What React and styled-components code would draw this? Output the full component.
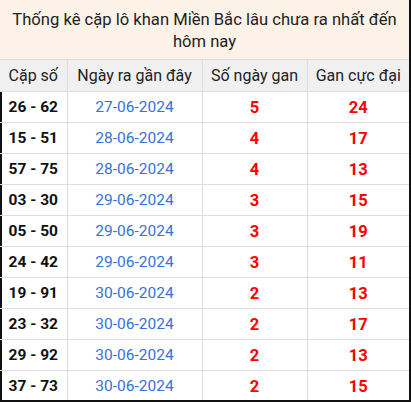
import React from "react";
import styled, { createGlobalStyle } from "styled-components";

const Global = createGlobalStyle`
  body {
    margin: 0;
    background: #fff;
    font-family: Roboto, "Noto Sans", sans-serif;
  }
`;

const Wrap = styled.div`
  width: 411px;
  height: 402px;
  box-sizing: border-box;
  border-right: 2px solid #111;
  border-bottom: 2px solid #111;
  overflow: hidden;
`;

const Caption = styled.div`
  background: #fdf2e7;
  color: #222;
  font-size: 16.6px;
  line-height: 22px;
  text-align: center;
  padding: 9px 8px 8px;
  height: 60px;
  box-sizing: border-box;
  border-bottom: 1px solid #ddd;
`;

const Table = styled.table`
  width: 100%;
  border-collapse: collapse;
  table-layout: fixed;
`;

const Th = styled.th`
  background: #f0f0f0;
  color: #222;
  font-weight: 400;
  font-size: 16px;
  height: 31px;
  padding: 0;
  border: 1px solid #ddd;
  border-top: none;
  &:first-child { border-left: none; }
  &:last-child { border-right: none; }
`;

const Td = styled.td`
  height: 30px;
  padding: 0;
  text-align: center;
  border: 1px solid #ddd;
  font-size: ${(p) => (p.$kind === "num" ? "16.5px" : "15.5px")};
  font-weight: ${(p) => (p.$kind === "date" ? 400 : 700)};
  color: ${(p) =>
    p.$kind === "date" ? "#3572dc" : p.$kind === "num" ? "#ff0000" : "#111"};
  &:first-child {
    border-left: none;
    box-shadow: inset 2px 0 #111;
  }
  &:last-child { border-right: none; }
`;

const rows = [
  ["26 - 62", "27-06-2024", 5, 24],
  ["15 - 51", "28-06-2024", 4, 17],
  ["57 - 75", "28-06-2024", 4, 13],
  ["03 - 30", "29-06-2024", 3, 15],
  ["05 - 50", "29-06-2024", 3, 19],
  ["24 - 42", "29-06-2024", 3, 11],
  ["19 - 91", "30-06-2024", 2, 13],
  ["23 - 32", "30-06-2024", 2, 17],
  ["29 - 92", "30-06-2024", 2, 13],
  ["37 - 73", "30-06-2024", 2, 15],
];

export default function App() {
  return (
    <Wrap>
      <Global />
      <Caption>Thống kê cặp lô khan Miền Bắc lâu chưa ra nhất đến hôm nay</Caption>
      <Table>
        <colgroup>
          <col style={{ width: 67 }} />
          <col style={{ width: 135 }} />
          <col style={{ width: 105 }} />
          <col />
        </colgroup>
        <thead>
          <tr>
            <Th>Cặp số</Th>
            <Th>Ngày ra gần đây</Th>
            <Th>Số ngày gan</Th>
            <Th>Gan cực đại</Th>
          </tr>
        </thead>
        <tbody>
          {rows.map((r) => (
            <tr key={r[0]}>
              <Td>{r[0]}</Td>
              <Td $kind="date">{r[1]}</Td>
              <Td $kind="num">{r[2]}</Td>
              <Td $kind="num">{r[3]}</Td>
            </tr>
          ))}
        </tbody>
      </Table>
    </Wrap>
  );
}
